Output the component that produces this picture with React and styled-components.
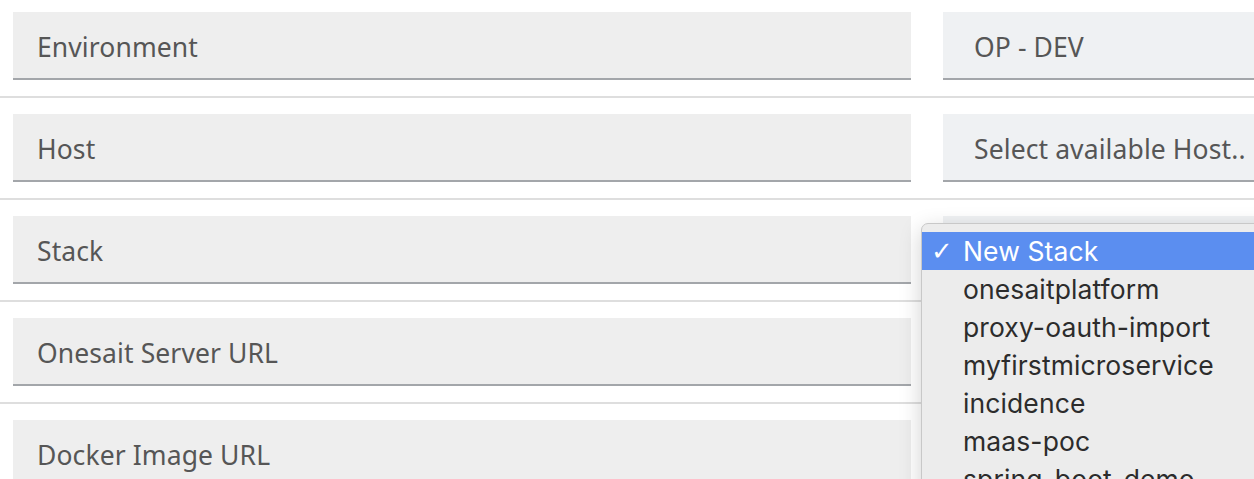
import React from 'react'
import styled, { createGlobalStyle } from 'styled-components'

const fields = [
  { label: 'Environment', value: 'OP - DEV' },
  { label: 'Host', value: 'Select available Host..' },
  { label: 'Stack', value: '', menu: true },
  { label: 'Onesait Server URL', value: '' },
  { label: 'Docker Image URL', value: '' },
]

const stacks = [
  'New Stack',
  'onesaitplatform',
  'proxy-oauth-import',
  'myfirstmicroservice',
  'incidence',
  'maas-poc',
  'spring-boot-demo',
]

const App = () => {
  return (
    <Page>
      <GlobalStyle />
      {fields.map((f) => (
        <Group key={f.label}>
          <Row>
            <Label>{f.label}</Label>
            <Select>
              {f.value}
              {f.menu && (
                <Menu>
                  {stacks.map((s, i) => (
                    <MenuItem key={s} selected={i === 0}>
                      <Check>{i === 0 ? '✓' : ''}</Check>
                      {s}
                    </MenuItem>
                  ))}
                </Menu>
              )}
            </Select>
          </Row>
          <Divider />
        </Group>
      ))}
    </Page>
  )
}

const GlobalStyle = createGlobalStyle`
    html, body {
        margin: 0;
        padding: 0;
        background: #ffffff;
        overflow: hidden;
    }
`
const Page = styled.div`
    width: 1254px;
    height: 479px;
    padding-top: 12px;
    box-sizing: border-box;
    overflow: hidden;
    font-family: "Noto Sans", "Open Sans", sans-serif;
`
const Group = styled.div`
    display: flex;
    flex-direction: column;
`
const Row = styled.div`
    display: grid;
    grid-template-columns: 898px 1fr;
    column-gap: 32px;
    padding-left: 13px;
    margin-bottom: 16px;
`
const Field = styled.div`
    height: 66px;
    box-sizing: border-box;
    padding-top: 4px;
    border-bottom: 2px solid #a3a6aa;
    display: flex;
    align-items: center;
    padding-left: 24px;
    font-size: 26.5px;
    letter-spacing: 0.1px;
    color: #565656;
    white-space: nowrap;
`
const Label = styled(Field)`
    background: #eeeeee;
    height: 68px;
`
const Select = styled(Field)`
    position: relative;
    height: 68px;
    background: #eff1f3;
    padding-left: 31px;
    margin-right: -40px;
`
const Divider = styled.div`
    height: 2px;
    background: #dedede;
    margin-bottom: 16px;
`
const Menu = styled.div`
    position: absolute;
    left: -22px;
    top: 7px;
    width: 380px;
    padding-top: 8px;
    background: #ececec;
    border: 1px solid #c8c8c8;
    border-radius: 7px 0 0 0;
    box-shadow: 0 6px 22px rgba(0, 0, 0, 0.18);
    z-index: 5;
`
const MenuItem = styled.div`
    height: 38px;
    display: flex;
    align-items: center;
    font-family: Inter, "Liberation Sans", sans-serif;
    font-size: 26.5px;
    color: ${(p) => (p.selected ? '#ffffff' : '#2c2c2c')};
    background: ${(p) => (p.selected ? '#5b8ef0' : 'transparent')};
`
const Check = styled.span`
    width: 41px;
    padding-left: 9px;
    box-sizing: border-box;
    font-family: "DejaVu Sans", sans-serif;
    font-size: 26px;
`

export default App
